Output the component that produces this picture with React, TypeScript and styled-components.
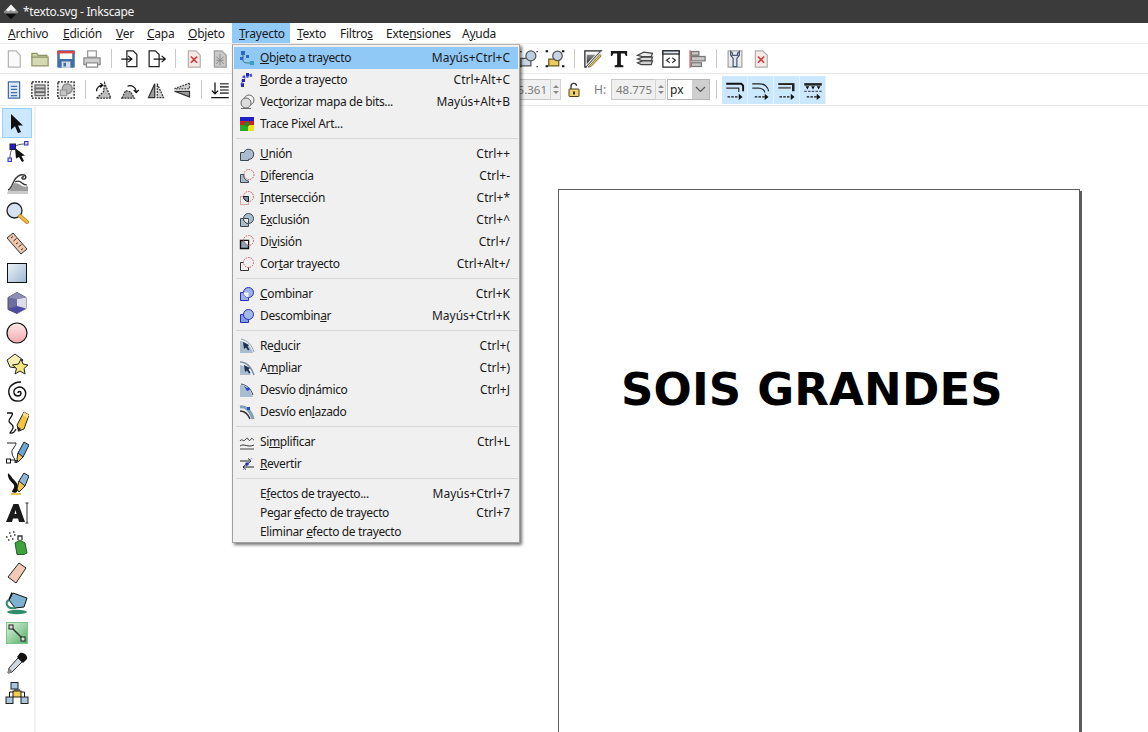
import React from "react";
import styled, { createGlobalStyle } from "styled-components";

const GlobalStyle = createGlobalStyle`
  html, body {
    margin: 0;
    padding: 0;
    background: #fff;
  }
  body {
    font-family: "Noto Sans", "Open Sans", sans-serif;
    font-size: 12px;
    color: #1a1a1a;
  }
`;

const Window = styled.div`
  position: relative;
  width: 1148px;
  height: 732px;
  overflow: hidden;
  display: flex;
  flex-direction: column;
  background: #fff;
`;

const TitleBar = styled.div`
  height: 23px;
  flex: none;
  background: #3b3b3b;
  color: #f4f4f4;
  display: flex;
  align-items: center;
  gap: 4px;
  padding-left: 3px;
  font-size: 12px;
  letter-spacing: -0.35px;
`;

const MenuBar = styled.div`
  height: 20px;
  flex: none;
  display: flex;
  padding-left: 1px;
  background: #fff;
  border-bottom: 1px solid #f0f0f0;
`;

const MenuBarItem = styled.div<{ $w: number; $active?: boolean }>`
  width: ${(p) => p.$w}px;
  flex: none;
  box-sizing: border-box;
  padding-left: 7px;
  display: flex;
  align-items: center;
  letter-spacing: -0.25px;
  background: ${(p) => (p.$active ? "#91c9f7" : "transparent")};
`;

const Toolbar = styled.div<{ $h: number }>`
  height: ${(p) => p.$h}px;
  flex: none;
  display: flex;
  align-items: center;
  padding-left: 1px;
  border-bottom: 1px solid #e8e8e8;
  box-sizing: border-box;
`;

const Slot = styled.div`
  width: 26px;
  height: 26px;
  flex: none;
  display: flex;
  align-items: center;
  justify-content: center;
`;

const Sep = styled.div<{ $w?: number }>`
  width: ${(p) => p.$w ?? 12}px;
  flex: none;
  display: flex;
  justify-content: center;
  &::after {
    content: "";
    width: 1px;
    height: 19px;
    background: #c8c8c8;
  }
`;

const Spacer = styled.div<{ $w: number }>`
  width: ${(p) => p.$w}px;
  flex: none;
`;

const NumField = styled.div<{ $w: number }>`
  width: ${(p) => p.$w}px;
  height: 21px;
  flex: none;
  box-sizing: border-box;
  border: 1px solid #c8c8c8;
  border-right: none;
  background: #f0f0f0;
  color: #7a7a7a;
  font-size: 11.5px;
  display: flex;
  align-items: center;
  justify-content: flex-end;
  padding-right: 3px;
`;

const Spin = styled.div`
  width: 11px;
  height: 21px;
  flex: none;
  box-sizing: border-box;
  border: 1px solid #d4d4d4;
  background: #f0f0f0;
  display: flex;
  flex-direction: column;
  align-items: center;
  justify-content: space-around;
  padding: 3px 0;
  &::before,
  &::after {
    content: "";
    border-left: 3px solid transparent;
    border-right: 3px solid transparent;
  }
  &::before {
    border-bottom: 3px solid #8a8a8a;
  }
  &::after {
    border-top: 3px solid #8a8a8a;
  }
`;

const FieldLabel = styled.span`
  width: 12px;
  margin: 0 5px 0 7px;
  flex: none;
  color: #7a7a7a;
  text-align: center;
`;

const UnitSelect = styled.div`
  width: 43px;
  height: 21px;
  margin-left: 1px;
  flex: none;
  box-sizing: border-box;
  border: 1px solid #b5b5b5;
  background: #fff;
  display: flex;
  align-items: center;
  justify-content: space-between;
  padding-left: 2px;
`;

const SelectArrow = styled.div`
  width: 17px;
  height: 19px;
  background: #cfcfcf;
  display: flex;
  align-items: center;
  justify-content: center;
`;

const SnapGroup = styled.div`
  display: flex;
  flex: none;
  height: 28px;
`;

const SnapButton = styled.div`
  width: 26px;
  box-sizing: border-box;
  background: #cce8ff;
  border-right: 1px solid #e4f3ff;
  display: flex;
  align-items: center;
  justify-content: center;
`;

const Body = styled.div`
  flex: 1;
  display: flex;
  min-height: 0;
`;

const ToolColumn = styled.div`
  width: 32px;
  flex: none;
  padding: 2px 0 0 2px;
  border-right: 2px solid #f2f2f2;
  display: flex;
  flex-direction: column;
`;

const ToolSlot = styled.div<{ $active?: boolean }>`
  width: 30px;
  height: 30px;
  flex: none;
  box-sizing: border-box;
  display: flex;
  align-items: center;
  justify-content: center;
  background: ${(p) => (p.$active ? "#cce8ff" : "transparent")};
  border: 1px solid ${(p) => (p.$active ? "#99d1ff" : "transparent")};
`;

const Canvas = styled.div`
  flex: 1;
  padding: 83px 0 0 522px;
  overflow: hidden;
`;

const Page = styled.div`
  width: 522px;
  height: 620px;
  box-sizing: border-box;
  border: 1px solid #5c5c5c;
  box-shadow: 2px 2px 0 #5c5c5c;
  background: #fff;
  padding: 167px 0 0 62px;
`;

const Headline = styled.div`
  font-family: "DejaVu Sans", sans-serif;
  font-weight: 700;
  font-size: 45px;
  letter-spacing: 0.15px;
  line-height: 66px;
  color: #000;
  white-space: nowrap;
`;

const Dropdown = styled.div`
  position: absolute;
  left: 232px;
  top: 44px;
  width: 288px;
  height: 499px;
  box-sizing: border-box;
  padding: 2px 1px;
  background: #f0f0f0;
  border: 1px solid #a0a0a0;
  border-top-color: #b8b8b8;
  box-shadow: 2px 2px 3px rgba(0, 0, 0, 0.55);
  z-index: 5;
`;

const DropRow = styled.div<{ $hot?: boolean; $h?: number }>`
  height: ${(p) => p.$h ?? 22}px;
  box-sizing: border-box;
  padding-top: ${(p) => (p.$h ? 2 : 0)}px;
  display: flex;
  align-items: center;
  background: ${(p) => (p.$hot ? "#90c8f6" : "transparent")};
  letter-spacing: -0.36px;
`;

const DropIcon = styled.div`
  width: 25px;
  flex: none;
  display: flex;
  justify-content: center;
`;

const DropLabel = styled.span`
  flex: 1;
  margin: 0 0 2px 1px;
  white-space: nowrap;
`;

const DropKey = styled.span`
  margin: 0 8px 2px 0;
  letter-spacing: 0;
  white-space: nowrap;
`;

const DropSep = styled.div<{ $tall?: boolean }>`
  height: ${(p) => (p.$tall ? 9 : 8)}px;
  box-sizing: border-box;
  padding: 0 0 ${(p) => (p.$tall ? 3 : 2)}px 2px;
  display: flex;
  align-items: center;
  &::after {
    content: "";
    flex: 1;
    height: 1px;
    background: #d7d7d7;
  }
`;

const Mn = styled.span`
  text-decoration: underline;
  text-underline-offset: 1px;
`;

const Ico = styled.svg`
  display: block;
  flex: none;
`;

const mnemonic = (s: string) => {
  const i = s.indexOf("_");
  if (i < 0) return s;
  return (
    <>
      {s.slice(0, i)}
      <Mn>{s[i + 1]}</Mn>
      {s.slice(i + 2)}
    </>
  );
};

type IconProps = { s?: number; children: React.ReactNode };
const I = ({ s = 16, children }: IconProps) => (
  <Ico width={s} height={s} viewBox="0 0 16 16">
    {children}
  </Ico>
);
const T = ({ children }: { children: React.ReactNode }) => (
  <Ico width={24} height={24} viewBox="0 0 24 24">
    {children}
  </Ico>
);

/* top toolbar drawings */
const Doc = ({ fill = "#fafafa", stroke = "#b4b4b4" }) => (
  <path d="M3.5 1.5h6l3.5 3.5v9.5h-9.5z" fill={fill} stroke={stroke} />
);
const tb: Record<string, React.ReactNode> = {
  newDoc: <I s={20}><Doc /></I>,
  open: (
    <I s={20}>
      <path d="M1.5 3.5h4l1 1.5h7v2h-12z" fill="#cfd3a8" stroke="#8f9468" />
      <path d="M1.5 6.5h13v7h-13z" fill="#d6dab2" stroke="#8f9468" />
    </I>
  ),
  save: (
    <I s={20}>
      <rect x="1" y="1" width="14" height="14" rx="1" fill="#3f6ea8" />
      <rect x="1" y="1.5" width="14" height="2.5" fill="#d8434a" />
      <rect x="3" y="3.5" width="10" height="4.5" fill="#fff" />
      <rect x="4.5" y="10" width="7" height="5" fill="#d5dde6" />
      <rect x="6" y="11" width="2" height="3" fill="#3f6ea8" />
    </I>
  ),
  print: (
    <I s={20}>
      <path d="M4.5 1.5h7v5h-7z" fill="#fff" stroke="#9a9a9a" />
      <path d="M1.5 7h13v5.5h-13z" fill="#cfcfcf" stroke="#8a8a8a" />
      <path d="M3.5 11h9v3.5h-9z" fill="#fff" stroke="#8a8a8a" />
    </I>
  ),
  import: (
    <I s={20}>
      <path d="M5.5 1.5h5l3 3v9.5h-8z" fill="#fff" stroke="#222" />
      <path d="M1 8h8M6.5 5.5L9.5 8l-3 2.5" fill="none" stroke="#111" />
    </I>
  ),
  export: (
    <I s={20}>
      <path d="M2.5 1.5h5l3 3v9.5h-8z" fill="#fff" stroke="#222" />
      <path d="M6 8h9M12.5 5.5L15.5 8l-3 2.5" fill="none" stroke="#111" />
    </I>
  ),
  delDoc: (
    <I s={20}>
      <Doc fill="#f4e9e6" stroke="#b8b0ae" />
      <path d="M5.5 6l5 5M10.5 6l-5 5" stroke="#d43a3a" strokeWidth="1.4" />
    </I>
  ),
  hatchDoc: (
    <I s={20}>
      <Doc fill="#c9c9c9" stroke="#a0a0a0" />
      <path d="M5 6l6 6M11 6l-6 6M5 9h6M8 4v9" stroke="#8c8c8c" strokeWidth=".8" />
    </I>
  ),
  zoomA: (
    <I s={20}>
      <path d="M1.5 7.500h8v6h-8z" fill="#c8d6e6" stroke="#555" />
      <circle cx="9.500" cy="5.500" r="4" fill="#b9cfe6" stroke="#555" />
      <path d="M1 2h1M1 14h1M14 14h1M14 2h1" stroke="#111" />
    </I>
  ),
  zoomB: (
    <I s={20}>
      <path d="M3 8h8v5.500H3z" fill="#eecb5f" stroke="#6a5a20" />
      <circle cx="10" cy="5.500" r="3.800" fill="#c7d6e6" stroke="#555" />
      <path d="M0.500 1h2v1.500h-2zM13.500 13h2v1.500h-2zM0.500 13h2v1.500h-2zM13.500 1h2v1.500h-2z" fill="#111" />
    </I>
  ),
  fill: (
    <I s={20}>
      <defs>
        <linearGradient id="fillG" x1="0" y1="0" x2="0" y2="1">
          <stop offset="0" stopColor="#8a8a8a" />
          <stop offset="1" stopColor="#333" />
        </linearGradient>
      </defs>
      <path d="M1.500 1.500h13L2.500 14.500h-1z" fill="#f4f4f4" stroke="#222" />
      <path d="M3 4.500h7L3 12z" fill="url(#fillG)" />
      <path d="M14.500 1.500v5L6 14.500H2.500z" fill="#dfe2e4" />
      <path d="M4 14.500l9.500-10 1 1-8 8.500z" fill="#ecc94a" stroke="#6a5a20" strokeWidth=".6" />
    </I>
  ),
  text: (
    <I s={20}>
      <path d="M1.500 1.500h13v4h-1l-1-2h-3v9l2 .7v1.300h-7v-1.300l2-.7v-9h-3l-1 2h-1z" fill="#1a1a1a" />
    </I>
  ),
  layers: (
    <I s={20}>
      <path d="M2 5l5-2.500 7 1-1 2.500H6z" fill="#eee" stroke="#444" />
      <path d="M2 8l4-1.500h8l-1 3H6z" fill="#ddd" stroke="#444" />
      <path d="M2 11l4-1.500h8l-1 3H5z" fill="#d0d0d0" stroke="#444" />
    </I>
  ),
  xml: (
    <I s={20}>
      <rect x="1.500" y="1.500" width="13" height="13" fill="#fff" stroke="#222" />
      <rect x="1.500" y="1.500" width="13" height="2.500" fill="#dfe6ee" stroke="#222" />
      <path d="M7 7L4.500 9 7 11M9 7l2.500 2L9 11" fill="none" stroke="#333" />
    </I>
  ),
  align: (
    <I s={20}>
      <path d="M2.500 1v14" stroke="#d04a4a" />
      <rect x="3.500" y="2" width="6" height="3" fill="#c6c6c6" stroke="#777" />
      <rect x="3.500" y="6" width="11" height="3.500" fill="#c6c6c6" stroke="#777" />
      <rect x="3.500" y="11" width="8" height="3" fill="#c6c6c6" stroke="#777" />
    </I>
  ),
  prefs: (
    <I s={20}>
      <path d="M2.500 1.500h11v13h-11z" fill="#ececec" stroke="#a5a5a5" />
      <path d="M4.500 2v3l2 2.500V14h3V7.500l2-2.500V2l-1.500 1.500v1.500H6V3.500z" fill="#e2e6ea" stroke="#4a5d78" />
    </I>
  ),
  docX: (
    <I s={20}>
      <Doc fill="#f4ebe8" stroke="#b0b0b0" />
      <path d="M5.500 6l5 5M10.500 6l-5 5" stroke="#d43a3a" strokeWidth="1.300" />
    </I>
  ),
  docProps: (
    <I s={20}>
      <path d="M3.500 1.500h9v13h-9z" fill="#dfe9f5" stroke="#3f6ea8" />
      <path d="M5.500 5h5M5.500 7.500h5M5.500 10h5M5.500 12.500h5" stroke="#3f6ea8" />
    </I>
  ),
  group: (
    <I s={20}>
      <rect x="1.500" y="1.500" width="13" height="13" fill="#f4f4f4" stroke="#111" strokeDasharray="1.500 1" />
      <rect x="4" y="4" width="8" height="2.500" fill="#cfcfcf" stroke="#666" />
      <rect x="4" y="7" width="8" height="2.500" fill="#cfcfcf" stroke="#666" />
      <rect x="4" y="10" width="8" height="2.500" fill="#cfcfcf" stroke="#666" />
    </I>
  ),
  ungroup: (
    <I s={20}>
      <rect x="1.500" y="1.500" width="13" height="13" fill="#efefef" stroke="#111" strokeDasharray="1.500 1" />
      <circle cx="9" cy="7" r="4" fill="#b5b5b5" stroke="#888" />
      <rect x="3.500" y="8" width="5" height="4.500" fill="#c6c6c6" stroke="#999" />
    </I>
  ),
  rotL: (
    <I s={20}>
      <path d="M2 14.500l5.500-5 1-7 5 12z" fill="#bdbdbd" stroke="#333" strokeDasharray="1.500 .8" />
      <path d="M2 9a5 5 0 0 1 5-5M5 2.500L7 4 5 6" fill="none" stroke="#111" />
    </I>
  ),
  rotR: (
    <I s={20}>
      <path d="M1.500 14.500l3-6 4 1 3 5z" fill="#a8a8a8" stroke="#333" strokeDasharray="1.500 .8" />
      <path d="M6 5a5 5 0 0 1 7 4M11 8l2 2 2-2" fill="none" stroke="#111" />
    </I>
  ),
  flipH: (
    <I s={20}>
      <path d="M7 3L2 14h5z" fill="#9d9d9d" stroke="#333" />
      <path d="M9 3l5 11H9z" fill="#d0d0d0" stroke="#333" strokeDasharray="1.500 .8" />
    </I>
  ),
  flipV: (
    <I s={20}>
      <path d="M14 2.500L2 7h12z" fill="#d0d0d0" stroke="#444" strokeDasharray="1.500 .8" />
      <path d="M14 13.500L2 9h12z" fill="#9d9d9d" stroke="#333" />
    </I>
  ),
  raise: (
    <I s={20}>
      <path d="M4 2v9M1.500 8.500L4 11l2.500-2.500M1 14h14" fill="none" stroke="#111" />
      <path d="M8 3h7M8 5.500h7M8 8h7M8 10.500h7" stroke="#555" strokeWidth="1.300" />
    </I>
  ),
  lock: (
    <I s={16}>
      <path d="M5 7V4.500a2.800 2.800 0 0 1 5.600-.6" fill="none" stroke="#333" strokeWidth="1.300" />
      <rect x="3" y="7" width="10" height="7.500" rx=".5" fill="#eed36b" stroke="#4a4020" />
      <rect x="7" y="9.500" width="2" height="3" fill="#333" />
    </I>
  ),
  chev: (
    <Ico width={11} height={7} viewBox="0 0 11 7">
      <path d="M1 1l4.500 4.500L10 1" fill="none" stroke="#555" strokeWidth="1.200" />
    </Ico>
  ),
  snap1: (
    <I s={20}>
      <path d="M1 3h12l1.500 1.500V9" fill="none" stroke="#111" strokeWidth="1.500" />
      <path d="M1 6.500h10v3" fill="none" stroke="#333" />
      <path d="M2 13.500h9" stroke="#111" strokeDasharray="2 1" />
      <path d="M11 11l3 2.500-3 2.500z" fill="#111" />
    </I>
  ),
  snap2: (
    <I s={20}>
      <path d="M1 3h6c4 0 7 3 7 6" fill="none" stroke="#222" />
      <path d="M1 6.500h5c3 0 5 2 5 3.500" fill="none" stroke="#333" />
      <path d="M3 13.500h8" stroke="#111" strokeDasharray="2 1" />
      <path d="M11 11l3 2.500-3 2.500z" fill="#111" />
    </I>
  ),
  snap3: (
    <I s={20}>
      <rect x="1" y="2.500" width="13" height="1.500" fill="#222" />
      <rect x="1" y="5.500" width="10" height="1.500" fill="#666" />
      <rect x="12" y="4" width="2" height="5" fill="#222" />
      <path d="M2 13.500h9" stroke="#111" strokeDasharray="2 1" />
      <path d="M11 11l3 2.500-3 2.500z" fill="#111" />
    </I>
  ),
  snap4: (
    <I s={20}>
      <path d="M1 2.500h14v2H1z" fill="#222" />
      <path d="M2 5l1.500 2.500L5 5zM6.500 5L8 7.500 9.500 5zM11 5l1.500 2.500L14 5z" fill="#111" />
      <path d="M1 9h14" stroke="#555" strokeDasharray="2 1" />
      <path d="M3 13.500h8" stroke="#111" strokeDasharray="2 1" />
      <path d="M11 11l3 2.500-3 2.500z" fill="#111" />
    </I>
  ),
};

/* tool column drawings */
const tools: React.ReactNode[] = [
  <T>
    <path d="M6 3l12 11.500h-5l3 6.500-3 1.200-3-7-4 3.500z" fill="#111" />
  </T>,
  <T>
    <path d="M5 17C5 11 7 7 9 6c3-2 6-3 10-3" fill="none" stroke="#555" />
    <path d="M10 7l10 7.500-3.500.5 2.500 5-2 1-3-5-3 1.500z" fill="#111" />
    <rect x="5" y="3" width="5.500" height="5.500" fill="#1f1fd0" stroke="#223" />
    <rect x="19.500" y="0.500" width="3.500" height="3.500" fill="#c9c9f5" stroke="#3535c0" />
    <rect x="3" y="17" width="3.500" height="3.500" fill="#c9c9f5" stroke="#3535c0" />
  </T>,
  <T>
    <path d="M3 19c3-1 4-5 6-9 2-4 6-7 10-6 3 1 2 5-1 4-2-.5-1-3 1-2" fill="none" stroke="#333" strokeWidth="1.400" />
    <path d="M10 11c2-1 5-1 7 1 1 1 3 2 5 2" fill="none" stroke="#333" strokeWidth="1.200" />
    <path d="M2 23c3-3 5-8 7-11 3 0 6 1 8 3 2 1 4 1 6 0v8z" fill="#9c9c9c" />
    <path d="M2 23h21v-3H3z" fill="#cbcbcb" />
  </T>,
  <T>
    <circle cx="9.500" cy="9.500" r="7.500" fill="#d4e2f2" stroke="#222" strokeWidth="1.300" />
    <path d="M15 15l7 6" stroke="#d08b1c" strokeWidth="4" strokeLinecap="round" />
    <path d="M15 15l7 6" stroke="#f1bd4a" strokeWidth="2" strokeLinecap="round" />
  </T>,
  <T>
    <path d="M2 7l6-5 14 16-6 5z" fill="#efc6ae" stroke="#333" />
    <path d="M6 7l2-1.500M8.500 10l3-2.500M11 13l2-1.500M13.500 16l3-2.500M16 19l2-1.500" stroke="#333" />
  </T>,
  <T>
    <defs>
      <linearGradient id="rectG" x1="0" y1="0" x2="1" y2="1">
        <stop offset="0" stopColor="#eef3f8" />
        <stop offset="1" stopColor="#9cb7d2" />
      </linearGradient>
    </defs>
    <rect x="2.500" y="2.500" width="19" height="19" fill="url(#rectG)" stroke="#111" />
  </T>,
  <T>
    <path d="M12 1.500l9 5v11l-9 5-9-4v-12z" fill="#6d6d9f" stroke="#555" />
    <path d="M12 8l9-1.500v11l-9 5z" fill="#dcdcea" />
    <path d="M12 15l-9 3 9 4.500 9-5z" fill="#4b4ba0" />
    <path d="M12 8l9-1.500-9-5-9 5z" fill="#8d8db8" />
  </T>,
  <T>
    <defs>
      <linearGradient id="circG" x1="0" y1="0" x2="0" y2="1">
        <stop offset="0" stopColor="#fdeaea" />
        <stop offset="1" stopColor="#f3a9ae" />
      </linearGradient>
    </defs>
    <circle cx="12" cy="12" r="10" fill="url(#circG)" stroke="#111" strokeWidth="1.200" />
  </T>,
  <T>
    <path d="M2 9l8-6 8 6-6 8-7-1z" fill="#f6f0b8" stroke="#222" />
    <path d="M16 8l2 5 5 1-4 3.500 1 5.500-5-3-5 3 1.500-5.500-4-3.500 6-1z" fill="#f4e77d" stroke="#222" />
  </T>,
  <T>
    <path d="M13 12c0-2 3-2 3 0 0 4-6 4-7 0-1-5 6-8 10-4 4 5 0 13-7 12-7 0-10-9-7-14 3-4 7-5 11-5" fill="none" stroke="#111" strokeWidth="1.400" />
  </T>,
  <T>
    <path d="M2 2h5c2 2-3 5-3 8 0 3 5 3 4 7-1 3-3 4-3 5 3 1 5-2 6-4" fill="none" stroke="#111" strokeWidth="1.300" />
    <path d="M14 20l-2-6 7-13 5 3-5 14z" fill="#f2c53e" stroke="#222" />
    <path d="M19 1l5 3-1.500 3-5-3z" fill="#f6e08c" />
    <path d="M12 15l4 3-3 3z" fill="#222" />
  </T>,
  <T>
    <path d="M2 2h9c0 4-5 6-4 10 0 3 3 6 3 7H5" fill="none" stroke="#222" />
    <rect x="1.500" y="18" width="4" height="4" fill="#fff" stroke="#111" />
    <rect x="9.500" y="19" width="3" height="3" fill="#333" />
    <path d="M14 16l-1-4 6-11 5 3-6 12z" fill="#68a8d4" stroke="#222" />
    <path d="M13 12l5 4-5 5-1-3z" fill="#f1c94b" stroke="#222" />
  </T>,
  <T>
    <path d="M3 2c-1 6 4 9 6 12 1 3-2 5-2 7 3 2 7 0 6-5C13 11 8 9 6 5z" fill="#111" />
    <path d="M15 13l-1-3 5-8 5 3-4 10z" fill="#8bb8d8" stroke="#222" />
    <path d="M14 10l6 5-6 6-2-3z" fill="#f2c947" stroke="#222" />
    <path d="M6 23h10" stroke="#d9b12d" strokeWidth="1.500" />
  </T>,
  <T>
    <path d="M1 21L8.500 3h5L20 21h-6l-1-3.500H8L7 21zM9.500 13h2L10.500 9z" fill="#1a1a1a" fillRule="evenodd" />
    <path d="M22 2v20M20.500 2h3M20.500 22h3" stroke="#333" />
  </T>,
  <T>
    <path d="M4 2h1.500M8 1h1.500M1 6h1.500M5 5h1.500M9 4h1.500M3 9h1.500M7 8h1.500" stroke="#333" strokeWidth="1.500" />
    <path d="M10 12l5-3 5 3 2 10-3 1.500h-7z" fill="#3ea23a" stroke="#2c5d29" />
    <path d="M13 9V5h4v4" fill="none" stroke="#333" strokeWidth="1.300" />
  </T>,
  <T>
    <path d="M3 16L14 2l7 5-10 15z" fill="#f3c9b8" stroke="#222" strokeLinejoin="round" />
  </T>,
  <T>
    <ellipse cx="12" cy="21" rx="10" ry="2.200" fill="#2f8c6a" />
    <path d="M8 2l14 5-3 9-9 1-6-8z" fill="#7eb1cf" stroke="#111" />
    <path d="M4 9c-2 1-3 3-2 5s4 4 9 3" fill="none" stroke="#2f8c6a" strokeWidth="2" />
    <path d="M7 1.500l-3 7" stroke="#111" strokeWidth="1.300" />
  </T>,
  <T>
    <defs>
      <linearGradient id="gradG" x1="0" y1="0" x2="1" y2="1">
        <stop offset="0" stopColor="#e4f4e4" />
        <stop offset="1" stopColor="#4fae62" />
      </linearGradient>
    </defs>
    <rect x="1.500" y="1.500" width="21" height="21" fill="url(#gradG)" stroke="#7cc487" />
    <path d="M6 6l12 12" stroke="#333" strokeWidth="1.400" />
    <rect x="4" y="4" width="4" height="4" fill="#ddd" stroke="#222" />
    <rect x="16" y="16" width="4" height="4" fill="#ddd" stroke="#222" />
  </T>,
  <T>
    <path d="M15 2l-3 4 6 6 4-4c1-3-3-7-7-6z" fill="#111" />
    <path d="M13 7l4 4-10 10-4 1 1-5z" fill="#cfd8df" stroke="#333" />
    <path d="M4 17l3 3-3 3-1.500-1.500z" fill="#888" />
  </T>,
  <T>
    <path d="M10 8v3H4.500v5M12 8v6M14 8v3h5.500v5" fill="none" stroke="#111" />
    <rect x="6" y="1.500" width="7" height="6.500" fill="#a8c6e0" stroke="#222" />
    <rect x="8" y="10" width="8" height="6" fill="#f1cd4a" stroke="#222" />
    <rect x="1" y="16" width="7" height="6.500" fill="#a8c6e0" stroke="#222" />
    <rect x="16" y="16" width="7" height="6.500" fill="#a8c6e0" stroke="#222" />
  </T>,
];

/* path menu drawings */
const sq = "M1.500 6.500h8v8h-8z";
const mi: Record<string, React.ReactNode> = {
  toPath: (
    <I>
      <path d="M4 4v6c0 3 3 3 8 3" fill="none" stroke="#3d6f82" />
      <rect x="2" y="1" width="4" height="4" fill="#2b66c8" />
      <rect x="1" y="7" width="3" height="3" fill="#2b66c8" />
      <rect x="7" y="5" width="3" height="3" fill="#2b66c8" />
      <rect x="11" y="11" width="4" height="4" fill="#3aa0b8" />
    </I>
  ),
  stroke: (
    <I>
      <path d="M3 13L5 5l8-2" fill="none" stroke="#4a4ad8" strokeWidth="3" strokeDasharray="2.500 1" />
      <rect x="7" y="1" width="3" height="3" fill="#2525b8" />
      <rect x="3" y="7" width="3" height="3" fill="#2525b8" />
      <rect x="2" y="12" width="3" height="3" fill="#2525b8" />
    </I>
  ),
  trace: (
    <I>
      <circle cx="10" cy="6" r="5" fill="#f2f2f2" stroke="#6a6a6a" />
      <circle cx="7" cy="9" r="5" fill="#dcdcdc" stroke="#6a6a6a" />
      <path d="M2 14.500h10" stroke="#6a6a6a" />
    </I>
  ),
  pixel: (
    <I>
      <rect x="1" y="1" width="14" height="14" fill="#d02020" />
      <rect x="1" y="1" width="14" height="4" fill="#2020c8" />
      <rect x="1" y="9" width="8" height="6" fill="#2aa82a" />
      <rect x="9" y="9" width="6" height="6" fill="#f0e020" />
      <circle cx="8" cy="8" r="2.500" fill="#228822" />
    </I>
  ),
  union: (
    <I>
      <path d="M1.500 14.500v-8H5a5 5 0 1 1 4.500 6.800v1.200z" fill="#a9bdce" stroke="#3c4852" />
    </I>
  ),
  diff: (
    <I>
      <path d="M1.500 6.500H5a5 5 0 0 0 4.500 6.500v1.500h-8z" fill="#a9bdce" stroke="#3c4852" />
      <circle cx="10" cy="6.500" r="5" fill="none" stroke="#d05555" strokeDasharray="1.500 1" />
    </I>
  ),
  inter: (
    <I>
      <path d={sq} fill="none" stroke="#c05050" strokeDasharray="1 1" />
      <circle cx="9.500" cy="6.500" r="5" fill="none" stroke="#d05555" strokeDasharray="1.500 1" />
      <path d="M4.500 6.500h5v5a5 5 0 0 1-5-5z" fill="#7b93a8" stroke="#222" />
    </I>
  ),
  excl: (
    <I>
      <path d={sq} fill="#a9bdce" stroke="#3c4852" />
      <circle cx="9.500" cy="6.500" r="5" fill="#a9bdce" stroke="#3c4852" />
      <path d="M4.500 6.500h5v5a5 5 0 0 1-5-5z" fill="#f0f0f0" stroke="#3c4852" />
    </I>
  ),
  div: (
    <I>
      <path d={sq} fill="#8da4b8" stroke="#111" strokeWidth="1.400" />
      <path d="M4.500 6.500h5v5" fill="#fff" stroke="#111" />
      <circle cx="9.500" cy="6.500" r="5" fill="none" stroke="#d05555" strokeDasharray="1.500 1" />
    </I>
  ),
  cut: (
    <I>
      <path d={sq} fill="#f0f0f0" stroke="#333" />
      <circle cx="9.500" cy="6.500" r="5" fill="#f0f0f0" stroke="#d05555" strokeDasharray="1.500 1" />
    </I>
  ),
  combine: (
    <I>
      <path d={sq} fill="#9ab2e6" stroke="#2a2ac8" />
      <circle cx="9.500" cy="6.500" r="5" fill="#9ab2e6" stroke="#2a2ac8" />
      <path d="M4.500 6.500h5v5a5 5 0 0 1-5-5z" fill="#f0f0f0" />
    </I>
  ),
  split: (
    <I>
      <path d={sq} fill="#7f9de0" stroke="#2a2ac8" />
      <circle cx="9.500" cy="6.500" r="5" fill="#a3bbe8" stroke="#2a2ac8" />
    </I>
  ),
  inset: (
    <I>
      <path d="M1 3c6 0 11 5 13 12H1z" fill="#a8bed0" />
      <path d="M2 1c6 1 11 6 13 13" fill="none" stroke="#8ba2b6" />
      <path d="M4 4l6 3-1.500 1.500 2 3-1.500 1-2-3L5 11z" fill="#1f3050" />
    </I>
  ),
  outset: (
    <I>
      <path d="M1 5c5 0 9 4 11 10H1z" fill="#a8bed0" />
      <path d="M1 2c7 0 12 6 14 13" fill="none" stroke="#7a93aa" strokeWidth="1.500" />
      <path d="M5 5l6 3-1.500 1.500 2 3-1.500 1-2-3L6 12z" fill="#1f3050" />
    </I>
  ),
  dyn: (
    <I>
      <path d="M1 3c6 0 11 5 13 12H1z" fill="#a8bed0" />
      <path d="M2 2c6 1 10 5 12 11" fill="none" stroke="#446" />
      <path d="M5 4l3 2 2-1 1 3-3 1z" fill="#2a4ad0" />
    </I>
  ),
  linked: (
    <I>
      <path d="M1 3c6-1 11 4 13 12" fill="none" stroke="#7fa0bc" strokeWidth="3" />
      <path d="M1 7c5 0 8 3 10 8" fill="none" stroke="#333" strokeWidth="1.500" />
      <rect x="8" y="3" width="3" height="3" fill="#2a4ad0" />
    </I>
  ),
  simplify: (
    <I>
      <path d="M1 7c2-3 3 1 5-1s2-3 3-1 2 2 3 0 2 1 3 1" fill="none" stroke="#333" />
      <path d="M1 12c4-3 8 2 14-1" fill="none" stroke="#333" />
      <path d="M1 15h14" stroke="#444" />
    </I>
  ),
  reverse: (
    <I>
      <path d="M1 5h11M9 2.500L12 5 9 7.500M15 11H4M7 8.500L4 11l3 2.500" fill="none" stroke="#222" />
      <path d="M4 14L13 2" stroke="#8a8ac8" />
      <circle cx="8" cy="8" r="1.800" fill="#3030c0" />
    </I>
  ),
};

const chrome = (
  <I>
    <path d="M8 .5l7.500 7.500L8 15.500.5 8z" fill="#8f8f8f" />
    <path d="M8 .5L13 6l-2 1.500L8 6 5 7.500 3 6z" fill="#f2f2f2" />
    <path d="M2 9.500h12L8 15.500z" fill="#0d0d0d" />
  </I>
);

const bar: [string, number, boolean?][] = [
  ["_Archivo", 55],
  ["_Edición", 53],
  ["_Ver", 31],
  ["_Capa", 41],
  ["_Objeto", 51],
  ["_Trayecto", 58, true],
  ["_Texto", 43],
  ["Filtro_s", 46],
  ["Exte_nsiones", 76],
  ["A_yuda", 46],
];

type Item = { icon?: string; label: string; key?: string; h?: number };
const groups: Item[][] = [
  [
    { icon: "toPath", label: "_Objeto a trayecto", key: "Mayús+Ctrl+C" },
    { icon: "stroke", label: "_Borde a trayecto", key: "Ctrl+Alt+C" },
    { icon: "trace", label: "Vec_torizar mapa de bits...", key: "Mayús+Alt+B" },
    { icon: "pixel", label: "Trace Pixel Art..." },
  ],
  [
    { icon: "union", label: "_Unión", key: "Ctrl++" },
    { icon: "diff", label: "_Diferencia", key: "Ctrl+-" },
    { icon: "inter", label: "_Intersección", key: "Ctrl+*" },
    { icon: "excl", label: "E_xclusión", key: "Ctrl+^" },
    { icon: "div", label: "Di_visión", key: "Ctrl+/" },
    { icon: "cut", label: "Cor_tar trayecto", key: "Ctrl+Alt+/" },
  ],
  [
    { icon: "combine", label: "_Combinar", key: "Ctrl+K" },
    { icon: "split", label: "Descombin_ar", key: "Mayús+Ctrl+K" },
  ],
  [
    { icon: "inset", label: "Re_ducir", key: "Ctrl+(" },
    { icon: "outset", label: "A_mpliar", key: "Ctrl+)" },
    { icon: "dyn", label: "Desvío d_inámico", key: "Ctrl+J" },
    { icon: "linked", label: "Desvío en_lazado" },
  ],
  [
    { icon: "simplify", label: "Si_mplificar", key: "Ctrl+L" },
    { icon: "reverse", label: "_Revertir" },
  ],
  [
    { label: "E_fectos de trayecto...", key: "Mayús+Ctrl+7", h: 19 },
    { label: "Pegar _efecto de trayecto", key: "Ctrl+7", h: 19 },
    { label: "Eliminar _efecto de trayecto", h: 19 },
  ],
];

const row1L = ["newDoc", "open", "save", "print", "|", "import", "export", "|", "delDoc", "hatchDoc"];
const row1R = ["zoomA", "zoomB", "|", "fill", "text", "layers", "xml", "align", "|", "prefs", "docX"];
const row2L = ["docProps", "group", "ungroup", "|", "rotL", "rotR", "flipH", "flipV", "|", "raise"];

const iconRow = (names: string[]) =>
  names.map((n, i) =>
    n === "|" ? <Sep key={i} /> : <Slot key={i}>{tb[n]}</Slot>
  );

export default function App() {
  return (
    <Window>
      <GlobalStyle />
      <TitleBar>
        {chrome}
        <span>*texto.svg - Inkscape</span>
      </TitleBar>
      <MenuBar>
        {bar.map(([label, w, active]) => (
          <MenuBarItem key={label} $w={w} $active={active}>
            <span>{mnemonic(label)}</span>
          </MenuBarItem>
        ))}
      </MenuBar>
      <Toolbar $h={30}>
        {iconRow(row1L)}
        <Spacer $w={283} />
        {iconRow(row1R)}
      </Toolbar>
      <Toolbar $h={32}>
        {iconRow(row2L)}
        <Spacer $w={286} />
        <NumField $w={31}>5.361</NumField>
        <Spin />
        <Slot>{tb.lock}</Slot>
        <FieldLabel>H:</FieldLabel>
        <NumField $w={44}>48.775</NumField>
        <Spin />
        <UnitSelect>
          <span>px</span>
          <SelectArrow>{tb.chev}</SelectArrow>
        </UnitSelect>
        <Sep />
        <SnapGroup>
          <SnapButton>{tb.snap1}</SnapButton>
          <SnapButton>{tb.snap2}</SnapButton>
          <SnapButton>{tb.snap3}</SnapButton>
          <SnapButton>{tb.snap4}</SnapButton>
        </SnapGroup>
      </Toolbar>
      <Body>
        <ToolColumn>
          {tools.map((t, i) => (
            <ToolSlot key={i} $active={i === 0}>
              {t}
            </ToolSlot>
          ))}
        </ToolColumn>
        <Canvas>
          <Page>
            <Headline>SOIS GRANDES</Headline>
          </Page>
        </Canvas>
      </Body>
      <Dropdown>
        {groups.map((g, gi) => (
          <React.Fragment key={gi}>
            {gi > 0 && <DropSep $tall={gi === groups.length - 1} />}
            {g.map((it, ii) => (
              <DropRow key={it.label} $hot={gi === 0 && ii === 0} $h={it.h}>
                <DropIcon>{it.icon ? mi[it.icon] : null}</DropIcon>
                <DropLabel>{mnemonic(it.label)}</DropLabel>
                {it.key && <DropKey>{it.key}</DropKey>}
              </DropRow>
            ))}
          </React.Fragment>
        ))}
      </Dropdown>
    </Window>
  );
}
